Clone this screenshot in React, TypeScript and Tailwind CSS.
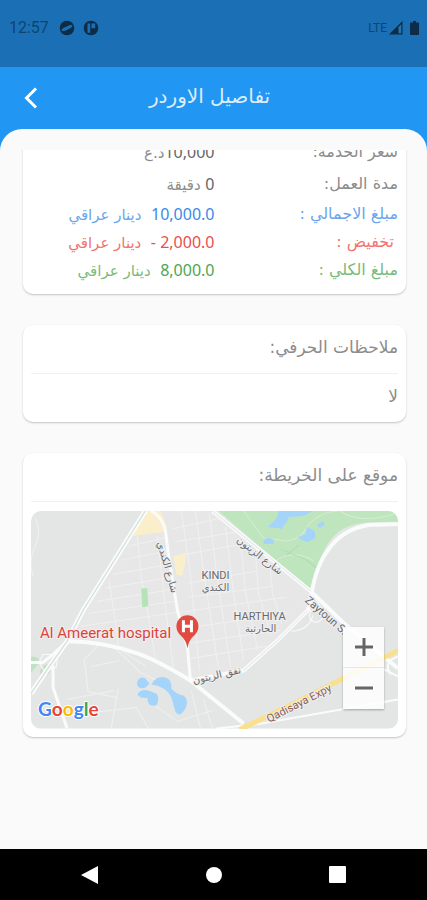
import type { ReactNode } from 'react'

type Tone = 'plain' | 'blue' | 'red' | 'green'

type PriceRow = {
  label: string
  amount: string
  unit: string
  tone: Tone
}

const rows: PriceRow[] = [
  { label: 'سعر الخدمة:', amount: '10,000', unit: 'د.ع', tone: 'plain' },
  { label: 'مدة العمل:', amount: '0', unit: ' دقيقة', tone: 'plain' },
  { label: 'مبلغ الاجمالي :', amount: '10,000.0', unit: '\u00a0 دينار عراقي', tone: 'blue' },
  { label: 'تخفيض :', amount: '2,000.0 -', unit: '\u00a0 دينار عراقي', tone: 'red' },
  { label: 'مبلغ الكلي :', amount: '8,000.0', unit: '\u00a0 دينار عراقي', tone: 'green' },
]

const toneClass: Record<Tone, string> = {
  plain: 'h-8 text-[#8c8c8c]',
  blue: 'h-7 text-[#6ba5ee]',
  red: 'h-7 text-[#f07472]',
  green: 'h-7 text-[#78bb7b]',
}

const amountClass: Record<Tone, string> = {
  plain: 'text-[#666666]',
  blue: 'text-[#3c8ae6]',
  red: 'text-[#e94f4c]',
  green: 'text-[#4fa554]',
}

function StatusBar() {
  return (
    <div className="flex h-[67px] items-start justify-between bg-[#1b70b5] pl-[9px] pr-2 pt-[18px] text-[#0d3a5f]">
      <div className="flex h-5 items-center">
        <span className="w-[50px] font-['Roboto',sans-serif] text-base leading-5 opacity-80">12:57</span>
        <svg className="h-4 w-4" viewBox="0 0 16 16" aria-hidden="true">
          <circle cx="8" cy="8" r="7.3" fill="#0c2c47" />
          <path d="M2.600 10.800C3.300 7.500 6 7.600 8.200 6.300c1.900-1.200 3.300-1.500 5.300-1.300-.7 3.400-3 3.500-5.200 4.700-2 1.200-3.600 1.500-5.700 1.100z" fill="#1b70b5" />
        </svg>
        <svg className="ml-2 h-4 w-4" viewBox="0 0 16 16" aria-hidden="true">
          <circle cx="8" cy="8" r="7.3" fill="#0c2c47" />
          <path d="M4.500 3.500h2.700v9.300H4.500zM8.500 3.500h3.700v4.700H8.500z" fill="#1b70b5" />
        </svg>
      </div>
      <div className="flex h-5 items-center">
        <span className="font-['Roboto',sans-serif] text-xs leading-5 opacity-80">LTE</span>
        <svg className="ml-0.5 h-[14px] w-[14px]" viewBox="0 0 14 14" aria-hidden="true">
          <path d="M0 13.500L13.500 0v13.500z" fill="#0c2c47" />
          <path d="M9.500 6l2.800-2.800v9.100H9.500z" fill="#2a74b0" />
        </svg>
        <svg className="ml-[7px] h-[14px] w-[9px]" viewBox="0 0 9 14" aria-hidden="true">
          <path d="M3 0h3v1.500h2.200q.8 0 .8.800v10.900q0 .8-.8.800H.8q-.8 0-.8-.8V2.300q0-.8.8-.8H3z" fill="#0c2c47" />
        </svg>
      </div>
    </div>
  )
}

function Header() {
  return (
    <header className="relative flex h-[62px] items-center justify-center text-white">
      <button type="button" aria-label="رجوع" className="absolute left-4 top-4 flex h-[30px] w-[30px] items-center justify-center">
        <svg className="h-6 w-4" viewBox="0 0 16 24" fill="none" stroke="currentColor" strokeWidth="3" aria-hidden="true">
          <path d="M13 2.500L3.500 12l9.500 9.500" />
        </svg>
      </button>
      <h1 className="pb-1 pr-2 text-xl leading-7 text-[#dcecfb]">تفاصيل الاوردر</h1>
    </header>
  )
}

function Card({ title, children }: { title: string; children: ReactNode }) {
  return (
    <section className="rounded-[10px] bg-white px-2 pb-2 shadow-[0_1px_2px_rgba(0,0,0,0.22)]">
      <h2 className="border-b border-[#f1f1f1] pb-3 pt-2 text-[17px] leading-7 text-[#8c8c8c]">{title}</h2>
      {children}
    </section>
  )
}

function PriceCard() {
  return (
    <section className="-mt-[26px] rounded-[10px] bg-white px-2 pb-[10px] pt-3 shadow-[0_1px_2px_rgba(0,0,0,0.22)]">
      <dl>
        {rows.map((row) => (
          <div key={row.label} className={`grid grid-cols-2 items-center ${toneClass[row.tone]}`}>
            <dt className={row.tone === 'red' ? 'pr-1 text-base' : 'text-base'}>{row.label}</dt>
            <dd className="whitespace-nowrap text-[15px]">
              <span className={`font-['Noto_Sans',sans-serif] text-base ${amountClass[row.tone]}`}>{row.amount}</span>
              {row.unit}
            </dd>
          </div>
        ))}
      </dl>
    </section>
  )
}

function MapDrawing() {
  return (
    <svg className="block h-auto w-full" viewBox="0 0 366 217" direction="ltr" role="img" aria-label="خريطة">
      <rect width="366" height="217" fill="#e4e5e5" />

      {/* city blocks */}
      <path d="M112 0L42 116l-6 14 33 2 37 10 26 14 27 13 53-10 34-30 32-30 5-19L181 0z" fill="#e7e7e8" />

      {/* minor streets */}
      <g fill="none" stroke="#f0f0f1">
        <path d="M98 35l35-8M90 49l46-9M82 63l57-10M74 77l66-11M66 90l77-12M58 102l86-12M50 115l97-14" />
        <path d="M106 25l4 42 8 43 6 38M78 70l5 34 4 30M126 25l8 70 8 62" />
        <path d="M140 18l55-12M143 31l62-10M150 44l66-12M156 72l68-12M157 86l84-11M149 101l106-15M153 117l104-15M157 132l92-13M159 147l76-12" />
        <path d="M150 0l9 63 9 96M164 0l8 60 15 97M178 3l7 58 14 95M194 16l8 66 10 67M209 30l5 51 12 58M224 45l3 37 12 42M238 53l3 30 9 29" />
        <path d="M69 132l-16 16 4 32 28 6M60 155l28-6M81 134l28 27 25 12M91 140l24 15M36 188l47-9M27 205l78-9 12 21M87 177l-7 40M118 190l28 20 35-11M160 180l9 37M172 188l9 29" />
        <path d="M4 7q7 12 0 28T2 65" />
      </g>

      {/* park */}
      <path d="M187 0h179v12q-38-4-55 6-17 10-24 36-3 16-7 22-4 1-10-4z" fill="#bfe5bf" />
      <g fill="none" stroke="#d5eccf">
        <path d="M212 0l20 27 23 3q15-2 20-14 11-15 31-16M242 51q20-14 40-1M308 0q20 14 58 2" />
        <path d="M249 38l26 11 10 8M267 34l-12 10" stroke="#acdcb0" />
      </g>
      <g fill="#a5d4fa">
        <path d="M247 0h34l-9 5-15 1q-1 6-5 8-1 6-5 3-5 0-11-1 6-5 9-9z" />
        <path d="M266 26l8-3 1-7 8 4 1 7-8 4-6-2z" />
        <path d="M285 14l6-4 2 4-5 3zM232 29q5-4 10 0v4h-10z" />
      </g>

      {/* open plots */}
      <path d="M112 0h17l7 16-5 5-29 4z" fill="#fbefcb" />
      <path d="M142 45l13-3-2 13-2 9h-6l-1-8z" fill="#fbefcb" />
      <path d="M110 77h6l1 18-6 1z" fill="#b5e3b8" />
      <path d="M0 145q11 0 7 8l-7 8zM9 159q5-8 11-6l-2 9-8 3z" fill="#bfe3c2" />

      {/* ponds */}
      <g fill="#a5d4fa">
        <path d="M106 170q3-6 8-3l4 5q-5 7-10 4-3-2-2-6zM106 183q3-6 11-4l8 3q4 5 0 12-9 2-9-8-6 2-10-3z" />
        <path d="M120 173q5-9 14-7 7 2 6 11 5 6 12 7 6 4 2 13-6 10-10 3l-4-14q-5-11-20-13z" />
      </g>

      {/* main roads */}
      <g fill="none" stroke="#fafbfb" strokeLinejoin="round">
        <path d="M114 0L52 99l-16 31-17 24L0 182" strokeWidth="5" />
        <path d="M0 151h12l10-8 14-13M22 154v22l14 41" strokeWidth="3" />
        <path d="M36 130q35 0 70 12 20 7 53 27l53 43" strokeWidth="4" />
        <path d="M120 0q10 5 14 19l3 24 9 56 10 37 3 33" strokeWidth="3" />
        <path d="M159 169l53-10 34-30 30-30q3-8 4-18 5-28 17-43 13-19 39-24l30-1" strokeWidth="4" />
        <path d="M181 0l98 80 33 32 54 45" strokeWidth="4" />
        <path d="M260 120q18-2 21-16M284 88q15 20 0 23-9-2-5-12" strokeWidth="1" />
        <path d="M185 217l45-5 136-24M352 158l14 7M366 145q-16 6-7 18" strokeWidth="2" />
        <path d="M12 143h15l-2 13-12 3-5-8z" strokeWidth="1" />
      </g>
      <path d="M114 0L52 99l-16 31-17 24L0 182" fill="none" stroke="#c9dcd3" />
      <path d="M181 0l98 80M212 159l34-30 30-30" fill="none" stroke="#e7e7e7" />
      <path d="M208 218l58-28 100-51" fill="none" stroke="#f9e08e" strokeWidth="5" />

      {/* place names */}
      <g fontFamily="Roboto, sans-serif" textAnchor="middle" fill="#68696b" stroke="#f0f0f0" strokeWidth="2" paintOrder="stroke">
        <text x="184" y="68" fontSize="11">KINDI</text>
        <text x="228" y="109" fontSize="11">HARTHIYA</text>
        <text fontSize="11" transform="translate(292 107) rotate(41)">Zaytoun S.</text>
        <text fontSize="11" fill="#8b5f51" transform="translate(269 195) rotate(-27)">Qadisaya Expy</text>
        <g fontFamily="'DejaVu Sans', sans-serif" fontSize="10">
          <text x="184" y="80">الكندي</text>
          <text x="229" y="121">الحارثية</text>
          <text transform="translate(226 47) rotate(38)">شارع الزيتون</text>
          <text transform="translate(133 57) rotate(74)">شارع الكندي</text>
          <text transform="translate(186 167) rotate(-13)">نفق الزيتون</text>
        </g>
      </g>

      {/* hospital pin */}
      <text x="9" y="127" fontFamily="Roboto, sans-serif" fontSize="15" fill="#d6443d" stroke="#f7eeee" strokeWidth="2" paintOrder="stroke">
        Al Ameerat hospital
      </text>
      <path d="M156 137q-1-8-7-13-4-4-4-9a11 11 0 0 1 22 0q0 5-4 9-6 5-7 13z" fill="#e14b42" />
      <path d="M152 109v12M160 109v12M152 115h8" fill="none" stroke="#ffffff" strokeWidth="3" />

      <text x="7" y="204" fontFamily="Lato, sans-serif" fontSize="19" fontWeight="700" stroke="#ffffff" strokeWidth="2" paintOrder="stroke">
        <tspan fill="#4285f4">G</tspan>
        <tspan fill="#ea4335">o</tspan>
        <tspan fill="#fbbc05">o</tspan>
        <tspan fill="#4285f4">g</tspan>
        <tspan fill="#34a853">l</tspan>
        <tspan fill="#ea4335">e</tspan>
      </text>
    </svg>
  )
}

function MapView() {
  return (
    <div className="relative mt-[9px] overflow-hidden rounded-[10px]">
      <MapDrawing />
      <div className="absolute bottom-5 right-[14px] flex w-[41px] flex-col bg-white/85 text-[#666666] shadow-[0_1px_2px_rgba(0,0,0,0.3)]">
        <button type="button" aria-label="تكبير" className="flex h-[41px] items-center justify-center border-b border-[#e6e6e6]">
          <svg className="h-5 w-5" viewBox="0 0 20 20" stroke="currentColor" strokeWidth="3" aria-hidden="true">
            <path d="M1 10h18M10 1v18" />
          </svg>
        </button>
        <button type="button" aria-label="تصغير" className="flex h-[41px] items-center justify-center">
          <svg className="h-5 w-5" viewBox="0 0 20 20" stroke="currentColor" strokeWidth="3" aria-hidden="true">
            <path d="M1 10h18" />
          </svg>
        </button>
      </div>
    </div>
  )
}

function NavigationBar() {
  return (
    <nav className="flex h-[51px] items-center justify-around bg-black px-7 text-white">
      <button type="button" aria-label="Back" className="p-2">
        <svg className="h-[18px] w-[18px]" viewBox="0 0 18 18" fill="currentColor" aria-hidden="true">
          <path d="M17 0v18L0 9z" />
        </svg>
      </button>
      <button type="button" aria-label="Home" className="p-2">
        <span className="block h-4 w-4 rounded-full bg-white" />
      </button>
      <button type="button" aria-label="Recent apps" className="p-2">
        <span className="block h-[17px] w-[17px] rounded-[1px] bg-white" />
      </button>
    </nav>
  )
}

export default function App() {
  return (
    <div className="flex min-h-screen flex-col bg-[#2196f3] font-['DejaVu_Sans',sans-serif]">
      <StatusBar />
      <Header />
      <main dir="rtl" className="flex-1 rounded-t-[22px] bg-[#fafafa] pb-8 pt-[21px]">
        {/* scroll area, already scrolled past the top of the price card */}
        <div className="flex flex-col gap-[31px] overflow-hidden pb-1 pl-[23px] pr-[21px]">
          <PriceCard />
          <Card title="ملاحظات الحرفي:">
            <p className="pb-1 pt-2 text-[17px] leading-7 text-[#8c8c8c]">لا</p>
          </Card>
          <Card title="موقع على الخريطة:">
            <MapView />
          </Card>
        </div>
      </main>
      <NavigationBar />
    </div>
  )
}
